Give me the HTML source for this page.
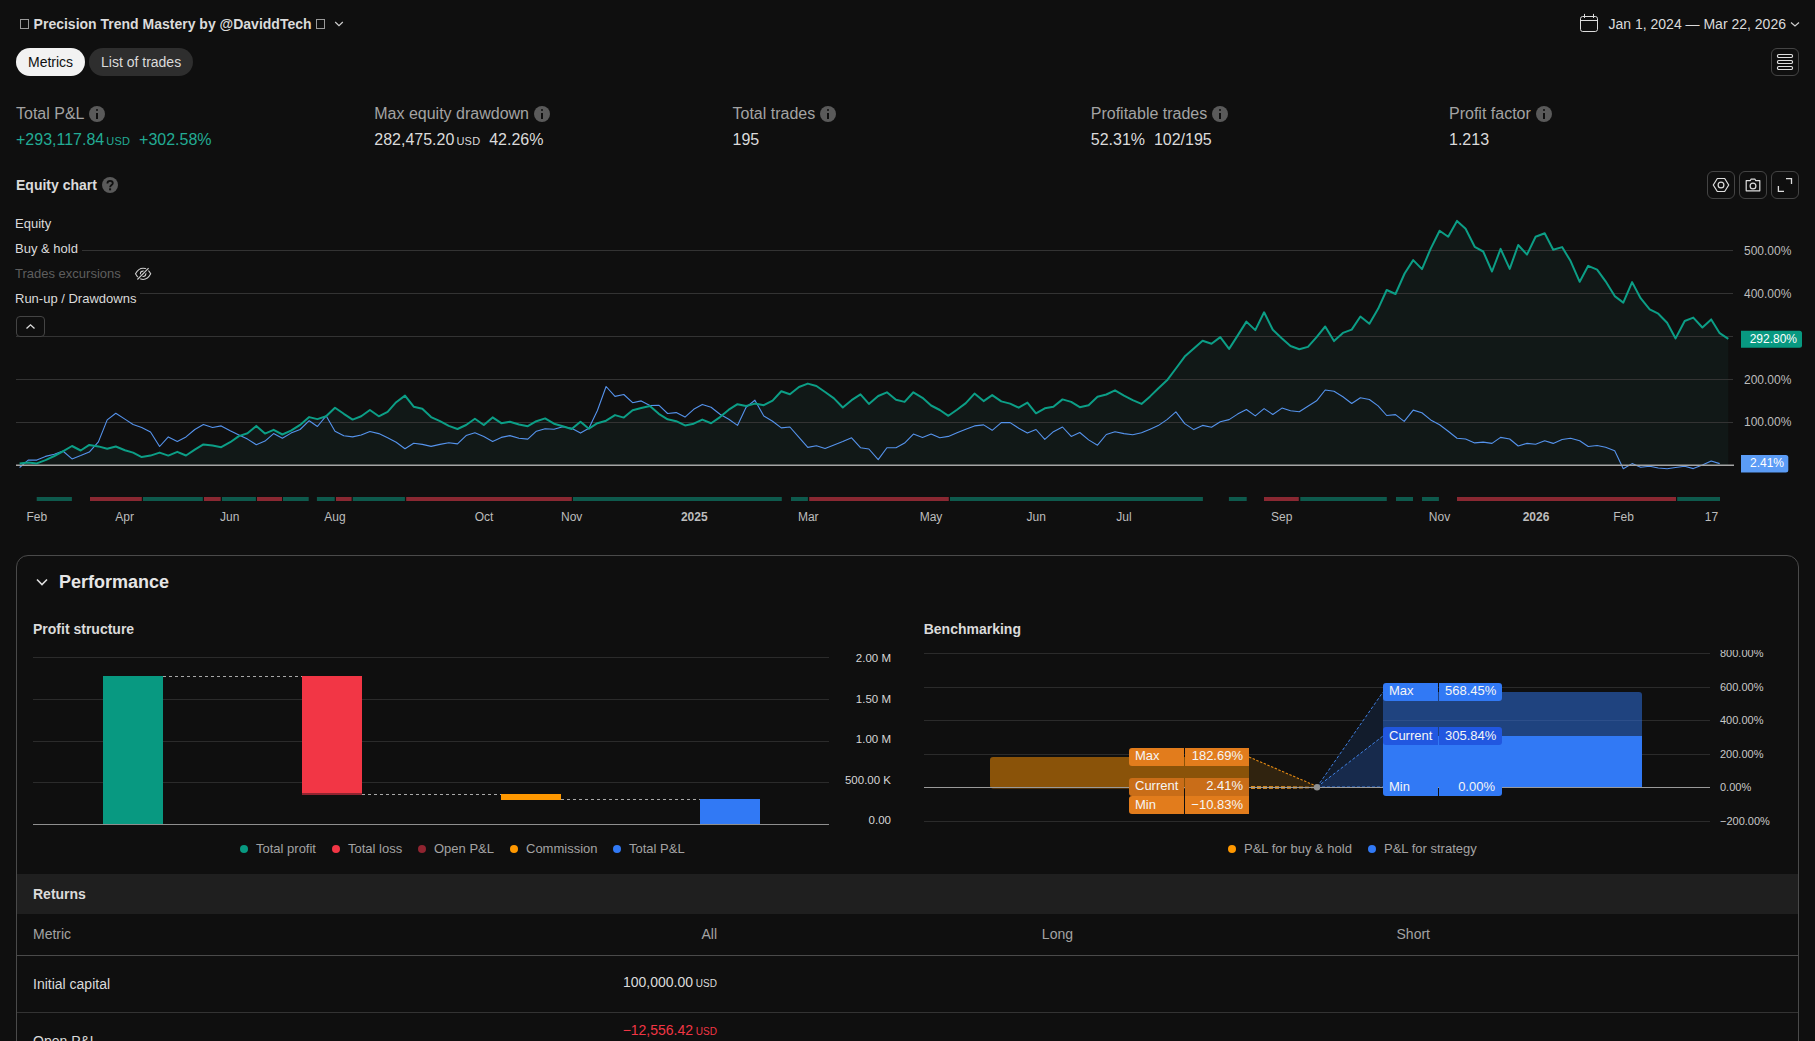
<!DOCTYPE html>
<html><head><meta charset="utf-8">
<style>
*{box-sizing:border-box;margin:0;padding:0}
html,body{width:1815px;height:1041px;overflow:hidden;background:#0f0f0f;font-family:"Liberation Sans",sans-serif;color:#dbdbdb}
.a{position:absolute;white-space:nowrap}
svg.a{overflow:visible}
.title{left:20px;top:15px;font-size:14px;font-weight:bold;color:#dbdbdb;line-height:18px}
.tofu{display:inline-block;width:8px;height:11px;border:1px solid #cfcfcf;vertical-align:-1px}
.pill{top:48px;height:28px;border-radius:14px;font-size:14px;line-height:28px;padding:0 12px}
.lbl{font-size:16px;color:#a3a3a3;line-height:20px}
.val{font-size:16px;color:#dbdbdb;line-height:20px}
.usd{font-size:11px;letter-spacing:0.2px;margin-left:1px}
.info{display:inline-block;width:16px;height:16px;border-radius:50%;background:#5a5a5a;vertical-align:-3px;margin-left:5px;position:relative}
.info::before{content:"";position:absolute;left:7px;top:3px;width:2px;height:2px;background:#0f0f0f;border-radius:1px}
.info::after{content:"";position:absolute;left:7px;top:6.5px;width:2px;height:6px;background:#0f0f0f}
.q{display:inline-block;width:16px;height:16px;border-radius:50%;background:#5a5a5a;vertical-align:0px;margin-left:5px;position:relative;top:-1px;color:#0f0f0f;font-size:12px;line-height:16px;text-align:center;font-weight:bold}
.ibtn{top:171px;width:28px;height:28px;border:1px solid #444;border-radius:6px}
.leg{font-size:13px;color:#dbdbdb;line-height:16px;left:15px}
.pleg{font-size:13px;color:#a3a3a3;line-height:16px}
.dot{display:inline-block;width:8px;height:8px;border-radius:50%;margin-right:8px;vertical-align:0px}
.bl{position:absolute;height:18px;font-size:13px;line-height:16px;color:#f5f5f5;padding:0 6px}
</style></head><body>

<div class="a" style="left:20px;top:19px;width:9px;height:10px;border:1px solid #9a9a9a"></div>
<div class="a title" style="left:33.6px">Precision Trend Mastery by @DaviddTech</div>
<div class="a" style="left:316px;top:19px;width:9px;height:10px;border:1px solid #9a9a9a"></div>
<svg class="a" style="left:334px;top:19px" width="10" height="10" viewBox="0 0 10 10"><path d="M1.2 3 L5 6.6 L8.8 3" stroke="#cfcfcf" stroke-width="1.2" fill="none"/></svg>

<svg class="a" style="left:1579px;top:13px" width="20" height="20" viewBox="0 0 20 20"><rect x="1.5" y="3.5" width="17" height="15" rx="2.2" stroke="#dcdcdc" stroke-width="1" fill="none"/><path d="M1.5 7.5H18.5M5.5 0.9V5M14.5 0.9V5" stroke="#dcdcdc" stroke-width="1"/></svg>
<div class="a" style="left:1608.5px;top:15px;font-size:14px;line-height:18px;color:#dbdbdb">Jan 1, 2024 — Mar 22, 2026</div>
<svg class="a" style="left:1790px;top:19px" width="10" height="10" viewBox="0 0 10 10"><path d="M1 3.5 L5 7 L9 3.5" stroke="#cfcfcf" stroke-width="1.2" fill="none"/></svg>

<div class="a pill" style="left:16px;width:69px;background:#f2f2f2;color:#0f0f0f">Metrics</div>
<div class="a pill" style="left:89px;width:104px;background:#2e2e2e;color:#dbdbdb">List of trades</div>

<div class="a" style="left:1771px;top:48px;width:28px;height:28px;border:1px solid #444;border-radius:6px"></div>
<svg class="a" style="left:1771px;top:48px" width="28" height="28" viewBox="0 0 28 28"><g stroke="#dedede" stroke-width="1.2" fill="none"><rect x="6.5" y="6.5" width="15" height="3" rx="1.2"/><rect x="6.5" y="12.5" width="15" height="3" rx="1.2"/><rect x="6.5" y="18.5" width="15" height="3" rx="1.2"/></g></svg>

<!-- metrics -->
<div class="a lbl" style="left:16px;top:104px">Total P&amp;L<span class="info"></span></div>
<div class="a val" style="left:16px;top:130px;color:#22ab94">+293,117.84<span class="usd">&#8202;USD</span>&nbsp;&nbsp;+302.58%</div>
<div class="a lbl" style="left:374.25px;top:104px">Max equity drawdown<span class="info"></span></div>
<div class="a val" style="left:374.25px;top:130px">282,475.20<span class="usd">&#8202;USD</span>&nbsp;&nbsp;42.26%</div>
<div class="a lbl" style="left:732.5px;top:104px">Total trades<span class="info"></span></div>
<div class="a val" style="left:732.5px;top:130px">195</div>
<div class="a lbl" style="left:1090.75px;top:104px">Profitable trades<span class="info"></span></div>
<div class="a val" style="left:1090.75px;top:130px">52.31%&nbsp;&nbsp;102/195</div>
<div class="a lbl" style="left:1449px;top:104px">Profit factor<span class="info"></span></div>
<div class="a val" style="left:1449px;top:130px">1.213</div>

<div class="a" style="left:16px;top:176px;font-size:14px;font-weight:bold;line-height:18px">Equity chart<svg width="16" height="16" viewBox="0 0 16 16" style="position:absolute;left:86px;top:1px"><circle cx="8" cy="8" r="8" fill="#5a5a5a"/><path d="M5.4 6.4 C5.4 4.8 6.6 3.9 8.1 3.9 C9.7 3.9 10.8 4.9 10.8 6.3 C10.8 7.9 8.1 8.3 8.1 10.3" stroke="#0f0f0f" stroke-width="1.8" fill="none"/><rect x="7.1" y="11.3" width="2" height="2" fill="#0f0f0f"/></svg></div>

<div class="a ibtn" style="left:1707px"></div>
<div class="a ibtn" style="left:1739px"></div>
<div class="a ibtn" style="left:1771px"></div>
<svg class="a" style="left:1707px;top:171px" width="28" height="28" viewBox="0 0 28 28"><g stroke="#dedede" stroke-width="1.2" fill="none"><path d="M6.3 14 L10.3 7.5 H17.7 L21.7 14 L17.7 20.5 H10.3 Z"/><circle cx="14" cy="14" r="2.9"/></g></svg>
<svg class="a" style="left:1739px;top:171px" width="28" height="28" viewBox="0 0 28 28"><g stroke="#dedede" stroke-width="1.2" fill="none"><path d="M7.2 9.6 H11.4 L12 8.1 H16 L16.6 9.6 H20.8 V19.8 H7.2 Z" stroke-linejoin="round"/><circle cx="14" cy="15" r="2.9"/></g></svg>
<svg class="a" style="left:1771px;top:171px" width="28" height="28" viewBox="0 0 28 28"><g stroke="#dedede" stroke-width="1.3" fill="none"><path d="M15 7.6 H20.5 V13"/><path d="M7.4 15 V20.4 H13"/></g></svg>

<!-- equity chart -->
<svg class="a" style="left:0;top:0" width="1815" height="1041">
<path d="M19.6,465 L19.6,463.4 L28.2,462.6 L36.8,463.4 L45.5,460.1 L54.3,456.0 L62.9,451.3 L72.0,446.0 L80.7,450.5 L89.3,444.9 L98.4,446.4 L107.2,448.8 L115.8,446.5 L124.9,450.2 L133.1,452.6 L141.7,457.1 L150.5,455.6 L159.6,452.6 L168.3,455.6 L177.3,451.8 L186.0,455.5 L194.8,449.7 L203.4,444.4 L212.5,445.5 L221.2,447.2 L230.2,442.2 L238.9,436.1 L247.5,433.3 L256.3,425.9 L265.0,433.6 L273.6,429.8 L282.4,434.5 L291.0,430.7 L300.1,424.9 L309.2,417.1 L317.4,419.1 L326.1,416.3 L335.0,407.7 L343.8,413.8 L352.6,419.6 L361.2,416.3 L369.9,410.0 L378.8,416.3 L387.6,411.8 L396.2,402.2 L405.0,395.6 L413.7,406.7 L422.3,408.8 L431.1,417.1 L440.0,421.2 L448.8,425.9 L457.5,429.0 L466.1,425.0 L474.9,418.8 L483.8,425.0 L492.6,417.4 L501.3,423.2 L509.9,421.7 L519.0,424.5 L527.8,426.2 L536.4,421.2 L545.1,418.4 L554.0,423.7 L562.8,426.2 L571.6,429.0 L580.5,421.7 L588.9,428.7 L597.4,423.2 L606.1,420.7 L615.0,415.1 L623.8,417.6 L632.6,410.2 L641.2,408.0 L649.9,406.0 L658.8,413.8 L667.6,419.3 L676.2,421.2 L685.0,425.4 L693.7,423.7 L702.3,419.6 L711.1,423.2 L720.0,417.1 L728.8,409.7 L737.5,404.2 L746.1,406.0 L754.9,403.6 L763.8,405.2 L772.6,400.6 L781.3,391.2 L789.9,394.3 L799.0,387.0 L807.8,383.6 L816.4,386.0 L825.1,392.0 L834.0,398.4 L842.8,407.5 L851.6,400.2 L860.5,394.3 L868.9,403.9 L878.2,396.0 L886.9,392.3 L896.0,399.8 L904.6,401.9 L913.4,392.3 L922.5,397.8 L931.1,405.5 L939.8,410.0 L948.4,415.8 L957.0,409.7 L965.8,403.1 L974.5,393.6 L983.6,401.1 L992.2,395.1 L1001.3,401.4 L1010.1,403.6 L1018.7,407.7 L1027.4,402.6 L1036.0,413.3 L1044.8,408.3 L1053.4,406.7 L1062.5,399.4 L1071.2,401.9 L1079.8,407.2 L1088.6,405.2 L1097.5,396.8 L1106.3,394.5 L1115.0,390.3 L1124.0,395.6 L1132.7,400.2 L1141.5,403.9 L1150.1,396.4 L1158.2,388.5 L1167.0,380.3 L1175.9,368.5 L1184.7,356.6 L1193.8,348.4 L1202.6,340.7 L1211.5,343.8 L1220.3,337.1 L1229.1,348.9 L1237.6,335.6 L1246.4,321.6 L1255.3,330.1 L1264.1,312.3 L1272.8,329.8 L1282.0,338.4 L1290.5,346.0 L1299.3,349.3 L1307.9,346.9 L1316.6,337.1 L1325.2,326.5 L1334.0,341.1 L1342.9,332.9 L1351.7,329.6 L1360.4,316.5 L1369.4,323.8 L1378.1,308.8 L1386.7,290.0 L1395.5,294.0 L1404.6,273.5 L1413.2,260.1 L1422.0,269.1 L1430.6,248.9 L1439.6,230.7 L1448.2,236.7 L1457.0,220.9 L1465.6,228.7 L1474.7,246.8 L1483.2,251.5 L1492.0,271.5 L1500.6,248.9 L1509.7,268.9 L1518.2,245.0 L1527.0,254.6 L1535.6,236.7 L1544.7,233.3 L1553.2,249.7 L1562.1,247.1 L1570.6,261.1 L1579.7,281.8 L1588.2,265.8 L1597.1,269.6 L1605.6,281.3 L1614.7,296.1 L1623.3,302.6 L1632.1,282.1 L1640.6,298.2 L1649.7,309.3 L1658.3,313.7 L1667.1,322.8 L1675.6,338.4 L1684.7,321.0 L1693.3,317.6 L1702.4,327.5 L1711.2,319.4 L1719.7,333.2 L1728.3,338.9 L1728.3,465 Z" fill="#111817"/>
<g stroke="#333333" stroke-width="1"><line x1="16" x2="1733" y1="250.5" y2="250.5"/><line x1="16" x2="1733" y1="293.5" y2="293.5"/><line x1="16" x2="1733" y1="336.5" y2="336.5"/><line x1="16" x2="1733" y1="379.5" y2="379.5"/><line x1="16" x2="1733" y1="422.5" y2="422.5"/></g>
<polyline points="19.6,467.5 28.2,460.1 36.8,460.1 45.5,456.4 54.3,454.3 62.9,451.0 72.0,458.9 80.7,455.6 89.3,452.1 98.4,441.9 107.2,419.9 115.8,413.3 124.9,419.1 133.1,424.5 141.7,427.5 150.5,432.0 159.6,446.5 168.3,436.9 177.3,441.4 186.0,436.9 194.8,429.5 203.4,424.5 212.5,427.5 221.2,425.9 230.2,430.8 238.9,435.0 247.5,439.1 256.3,444.7 265.0,441.1 273.6,433.6 282.4,438.3 291.0,433.1 300.1,429.5 309.2,420.7 317.4,426.5 326.1,415.8 335.0,431.2 343.8,435.8 352.6,436.9 361.2,435.0 369.9,431.5 378.8,433.6 387.6,437.8 396.2,442.2 405.0,448.8 413.7,443.2 422.3,444.4 431.1,446.4 440.0,444.4 448.8,442.7 457.5,443.9 466.1,435.6 474.9,432.8 483.8,436.6 492.6,441.4 501.3,437.4 509.9,435.6 519.0,438.3 527.8,439.1 536.4,431.2 545.1,428.7 554.0,429.2 562.8,426.7 571.6,428.3 580.5,433.1 588.9,428.2 597.4,410.5 606.1,386.5 615.0,396.4 623.8,394.5 632.6,402.7 641.2,400.9 649.9,405.5 658.8,405.2 667.6,413.5 676.2,412.6 685.0,417.1 693.7,409.3 702.3,404.4 711.1,407.2 720.0,414.3 728.8,419.3 737.5,425.4 746.1,407.2 754.9,400.2 763.8,416.0 772.6,421.2 781.3,427.9 789.9,427.0 799.0,437.3 807.8,447.4 816.4,445.7 825.1,448.5 834.0,444.9 842.8,441.6 851.6,437.8 860.5,447.7 868.9,449.0 878.2,459.6 886.9,447.7 896.0,447.7 904.6,443.1 913.4,434.1 922.5,437.4 931.1,434.1 939.8,437.8 948.4,436.4 957.0,432.8 965.8,429.2 974.5,425.9 983.6,424.9 992.2,430.3 1001.3,422.6 1010.1,422.6 1018.7,428.2 1027.4,433.1 1036.0,429.5 1044.8,439.4 1053.4,431.7 1062.5,427.0 1071.2,436.4 1079.8,432.5 1088.6,439.9 1097.5,445.2 1106.3,434.5 1115.0,431.7 1124.0,433.6 1132.7,434.8 1141.5,432.8 1150.1,429.2 1158.2,425.6 1167.0,419.6 1175.9,411.9 1184.7,423.6 1193.8,429.6 1202.6,425.4 1211.5,427.2 1220.3,421.8 1229.1,419.6 1237.6,414.1 1246.4,409.5 1255.3,415.9 1264.1,408.6 1272.8,414.5 1282.0,408.1 1290.5,410.8 1299.3,411.7 1307.9,406.2 1316.6,400.8 1325.2,390.0 1334.0,391.3 1342.9,396.8 1351.7,403.5 1360.4,397.7 1369.4,399.5 1378.1,405.9 1386.7,415.5 1395.5,414.6 1404.2,421.4 1413.2,410.1 1421.9,412.8 1430.7,419.9 1439.6,424.7 1448.2,431.2 1457.0,438.2 1465.6,439.0 1474.7,442.9 1483.2,442.1 1492.0,443.4 1500.6,437.4 1509.7,439.0 1518.2,446.0 1527.0,443.4 1535.6,444.2 1544.7,440.8 1553.2,443.4 1562.1,439.5 1570.6,438.2 1579.7,440.8 1588.2,446.5 1597.1,445.5 1605.6,447.3 1614.7,450.7 1623.3,468.8 1632.1,463.6 1640.6,467.3 1649.7,466.2 1658.3,468.0 1667.1,468.8 1675.6,467.5 1684.7,466.2 1693.3,468.6 1702.4,464.9 1711.2,461.0 1719.7,463.6" fill="none" stroke="#5593ec" stroke-width="1.1" stroke-linejoin="round"/>
<line x1="16" x2="1734" y1="465.3" y2="465.3" stroke="#a5a5a5" stroke-width="1.5"/>
<polyline points="19.6,463.4 28.2,462.6 36.8,463.4 45.5,460.1 54.3,456.0 62.9,451.3 72.0,446.0 80.7,450.5 89.3,444.9 98.4,446.4 107.2,448.8 115.8,446.5 124.9,450.2 133.1,452.6 141.7,457.1 150.5,455.6 159.6,452.6 168.3,455.6 177.3,451.8 186.0,455.5 194.8,449.7 203.4,444.4 212.5,445.5 221.2,447.2 230.2,442.2 238.9,436.1 247.5,433.3 256.3,425.9 265.0,433.6 273.6,429.8 282.4,434.5 291.0,430.7 300.1,424.9 309.2,417.1 317.4,419.1 326.1,416.3 335.0,407.7 343.8,413.8 352.6,419.6 361.2,416.3 369.9,410.0 378.8,416.3 387.6,411.8 396.2,402.2 405.0,395.6 413.7,406.7 422.3,408.8 431.1,417.1 440.0,421.2 448.8,425.9 457.5,429.0 466.1,425.0 474.9,418.8 483.8,425.0 492.6,417.4 501.3,423.2 509.9,421.7 519.0,424.5 527.8,426.2 536.4,421.2 545.1,418.4 554.0,423.7 562.8,426.2 571.6,429.0 580.5,421.7 588.9,428.7 597.4,423.2 606.1,420.7 615.0,415.1 623.8,417.6 632.6,410.2 641.2,408.0 649.9,406.0 658.8,413.8 667.6,419.3 676.2,421.2 685.0,425.4 693.7,423.7 702.3,419.6 711.1,423.2 720.0,417.1 728.8,409.7 737.5,404.2 746.1,406.0 754.9,403.6 763.8,405.2 772.6,400.6 781.3,391.2 789.9,394.3 799.0,387.0 807.8,383.6 816.4,386.0 825.1,392.0 834.0,398.4 842.8,407.5 851.6,400.2 860.5,394.3 868.9,403.9 878.2,396.0 886.9,392.3 896.0,399.8 904.6,401.9 913.4,392.3 922.5,397.8 931.1,405.5 939.8,410.0 948.4,415.8 957.0,409.7 965.8,403.1 974.5,393.6 983.6,401.1 992.2,395.1 1001.3,401.4 1010.1,403.6 1018.7,407.7 1027.4,402.6 1036.0,413.3 1044.8,408.3 1053.4,406.7 1062.5,399.4 1071.2,401.9 1079.8,407.2 1088.6,405.2 1097.5,396.8 1106.3,394.5 1115.0,390.3 1124.0,395.6 1132.7,400.2 1141.5,403.9 1150.1,396.4 1158.2,388.5 1167.0,380.3 1175.9,368.5 1184.7,356.6 1193.8,348.4 1202.6,340.7 1211.5,343.8 1220.3,337.1 1229.1,348.9 1237.6,335.6 1246.4,321.6 1255.3,330.1 1264.1,312.3 1272.8,329.8 1282.0,338.4 1290.5,346.0 1299.3,349.3 1307.9,346.9 1316.6,337.1 1325.2,326.5 1334.0,341.1 1342.9,332.9 1351.7,329.6 1360.4,316.5 1369.4,323.8 1378.1,308.8 1386.7,290.0 1395.5,294.0 1404.6,273.5 1413.2,260.1 1422.0,269.1 1430.6,248.9 1439.6,230.7 1448.2,236.7 1457.0,220.9 1465.6,228.7 1474.7,246.8 1483.2,251.5 1492.0,271.5 1500.6,248.9 1509.7,268.9 1518.2,245.0 1527.0,254.6 1535.6,236.7 1544.7,233.3 1553.2,249.7 1562.1,247.1 1570.6,261.1 1579.7,281.8 1588.2,265.8 1597.1,269.6 1605.6,281.3 1614.7,296.1 1623.3,302.6 1632.1,282.1 1640.6,298.2 1649.7,309.3 1658.3,313.7 1667.1,322.8 1675.6,338.4 1684.7,321.0 1693.3,317.6 1702.4,327.5 1711.2,319.4 1719.7,333.2 1728.3,338.9" fill="none" stroke="#0c9e86" stroke-width="2" stroke-linejoin="round"/>
<rect x="36.7" y="497" width="35.2" height="4" fill="#0e5a4d"/><rect x="90.0" y="497" width="51.8" height="4" fill="#8a2832"/><rect x="143.0" y="497" width="59.8" height="4" fill="#0e5a4d"/><rect x="204.0" y="497" width="16.7" height="4" fill="#8a2832"/><rect x="222.0" y="497" width="33.9" height="4" fill="#0e5a4d"/><rect x="257.0" y="497" width="25.0" height="4" fill="#8a2832"/><rect x="283.0" y="497" width="25.7" height="4" fill="#0e5a4d"/><rect x="316.9" y="497" width="17.8" height="4" fill="#0e5a4d"/><rect x="336.0" y="497" width="15.6" height="4" fill="#8a2832"/><rect x="352.8" y="497" width="52.1" height="4" fill="#0e5a4d"/><rect x="406.2" y="497" width="165.6" height="4" fill="#8a2832"/><rect x="573.0" y="497" width="208.8" height="4" fill="#0e5a4d"/><rect x="791.0" y="497" width="16.9" height="4" fill="#0e5a4d"/><rect x="809.2" y="497" width="139.6" height="4" fill="#8a2832"/><rect x="950.0" y="497" width="252.9" height="4" fill="#0e5a4d"/><rect x="1228.9" y="497" width="17.8" height="4" fill="#0e5a4d"/><rect x="1264.0" y="497" width="34.8" height="4" fill="#8a2832"/><rect x="1300.3" y="497" width="86.5" height="4" fill="#0e5a4d"/><rect x="1396.0" y="497" width="17.0" height="4" fill="#0e5a4d"/><rect x="1422.0" y="497" width="16.9" height="4" fill="#0e5a4d"/><rect x="1457.0" y="497" width="219.0" height="4" fill="#8a2832"/><rect x="1677.2" y="497" width="42.8" height="4" fill="#0e5a4d"/>
<g font-family="Liberation Sans" font-size="12" fill="#bdbdbd"><text x="36.8" y="521" text-anchor="middle">Feb</text><text x="124.6" y="521" text-anchor="middle">Apr</text><text x="229.7" y="521" text-anchor="middle">Jun</text><text x="334.9" y="521" text-anchor="middle">Aug</text><text x="484.0" y="521" text-anchor="middle">Oct</text><text x="571.7" y="521" text-anchor="middle">Nov</text><text x="694.3" y="521" text-anchor="middle" font-weight="bold">2025</text><text x="808.3" y="521" text-anchor="middle">Mar</text><text x="931.0" y="521" text-anchor="middle">May</text><text x="1036.2" y="521" text-anchor="middle">Jun</text><text x="1124.0" y="521" text-anchor="middle">Jul</text><text x="1281.8" y="521" text-anchor="middle">Sep</text><text x="1439.5" y="521" text-anchor="middle">Nov</text><text x="1536.0" y="521" text-anchor="middle" font-weight="bold">2026</text><text x="1623.5" y="521" text-anchor="middle">Feb</text><text x="1711.4" y="521" text-anchor="middle">17</text></g>
<g font-family="Liberation Sans" font-size="12" fill="#bdbdbd"><text x="1744" y="255.1">500.00%</text><text x="1744" y="297.8">400.00%</text><text x="1744" y="383.8">200.00%</text><text x="1744" y="425.7">100.00%</text></g>
<path d="M1741 330.8 H1799.5 Q1802 330.8 1802 333.3 V345.3 Q1802 347.8 1799.5 347.8 H1741 Z" fill="#089981"/>
<text x="1797" y="342.6" text-anchor="end" font-family="Liberation Sans" font-size="12" fill="#ffffff">292.80%</text>
<path d="M1741 455 H1785.8 Q1788.3 455 1788.3 457.5 V470 Q1788.3 472.5 1785.8 472.5 H1741 Z" fill="#5b9cf6"/>
<text x="1784" y="466.6" text-anchor="end" font-family="Liberation Sans" font-size="12" fill="#ffffff">2.41%</text>
</svg>

<div class="a leg" style="top:216px;background:#0f0f0f;padding-right:8px">Equity</div>
<div class="a leg" style="top:241px;background:#0f0f0f;padding-right:4px;width:67px">Buy &amp; hold</div>
<div class="a leg" style="top:266px;background:#0f0f0f;color:#5e5e5e;width:141px">Trades excursions</div>
<svg class="a" style="left:134px;top:266px" width="18" height="16" viewBox="0 0 18 16"><g fill="none"><path d="M1.5 7.8 C3.5 4 6 2.2 9.1 2.2 C12.2 2.2 14.7 4 16.7 7.8 C14.7 11.6 12.2 13.5 9.1 13.5 C6 13.5 3.5 11.6 1.5 7.8 Z" stroke="#cfcfcf" stroke-width="1.1"/><circle cx="9.1" cy="7.8" r="2.7" stroke="#cfcfcf" stroke-width="1.1"/><path d="M3.4 13.5 L14.6 2.2" stroke="#0f0f0f" stroke-width="3"/><path d="M3.4 13.5 L14.6 2.2" stroke="#cfcfcf" stroke-width="1.1"/></g></svg>
<div class="a leg" style="top:291px;background:#0f0f0f;width:125px">Run-up / Drawdowns</div>
<div class="a" style="left:16px;top:316px;width:29px;height:21px;border:1px solid #444;border-radius:4px;background:#0f0f0f"></div>
<svg class="a" style="left:16px;top:316px" width="29" height="21" viewBox="0 0 29 21"><path d="M10.5 12.5 L14.5 8.8 L18.5 12.5" stroke="#dedede" stroke-width="1.3" fill="none"/></svg>

<!-- performance panel -->
<div class="a" style="left:16px;top:555px;width:1783px;height:600px;border:1px solid #4a4a4a;border-radius:12px"></div>
<svg class="a" style="left:35px;top:576px" width="14" height="12" viewBox="0 0 14 12"><path d="M2 3.5 L7 8.5 L12 3.5" stroke="#dedede" stroke-width="1.6" fill="none"/></svg>
<div class="a" style="left:59px;top:571px;font-size:18px;font-weight:bold;line-height:22px;color:#e6e6e6">Performance</div>

<div class="a" style="left:33px;top:620px;font-size:14px;font-weight:bold;line-height:18px">Profit structure</div>
<div class="a" style="left:923.7px;top:620px;font-size:14px;font-weight:bold;line-height:18px">Benchmarking</div>


<!-- profit structure chart -->
<svg class="a" style="left:0;top:0" width="1815" height="1041">
<g stroke="#2b2b2b" stroke-width="1"><line x1="33" x2="829" y1="657.5" y2="657.5"/><line x1="33" x2="829" y1="699.5" y2="699.5"/><line x1="33" x2="829" y1="741.5" y2="741.5"/><line x1="33" x2="829" y1="782.5" y2="782.5"/></g>
<rect x="103" y="676" width="60" height="148.5" fill="#089981"/>
<rect x="302" y="676" width="60" height="119" fill="#f23645"/>
<rect x="302" y="793" width="60" height="2" fill="#902430"/>
<rect x="501" y="794" width="60" height="6" fill="#ff9800"/>
<rect x="700" y="799" width="60" height="25.5" fill="#3179f5"/>
<g stroke="#a8a8a8" stroke-width="1" stroke-dasharray="3 3"><line x1="163" x2="302" y1="676.5" y2="676.5"/><line x1="362" x2="501" y1="794.5" y2="794.5"/><line x1="561" x2="700" y1="799.5" y2="799.5"/></g>
<line x1="33" x2="829" y1="824.5" y2="824.5" stroke="#8f8f8f" stroke-width="1.2"/>
<g font-family="Liberation Sans" font-size="11.5" fill="#d6d6d6" text-anchor="end">
<text x="891" y="662">2.00 M</text><text x="891" y="703">1.50 M</text><text x="891" y="743.2">1.00 M</text><text x="891" y="784.2">500.00 K</text><text x="891" y="824.3">0.00</text></g>
</svg>
<div class="a pleg" style="left:240px;top:841px"><span class="dot" style="background:#089981"></span>Total profit</div>
<div class="a pleg" style="left:332px;top:841px"><span class="dot" style="background:#f23645"></span>Total loss</div>
<div class="a pleg" style="left:418px;top:841px"><span class="dot" style="background:#902430"></span>Open P&amp;L</div>
<div class="a pleg" style="left:510px;top:841px"><span class="dot" style="background:#ff9800"></span>Commission</div>
<div class="a pleg" style="left:613px;top:841px"><span class="dot" style="background:#3179f5"></span>Total P&amp;L</div>

<!-- benchmarking chart -->
<svg class="a" style="left:0;top:0" width="1815" height="1041">
<g stroke="#2b2b2b" stroke-width="1"><line x1="924" x2="1710" y1="653.5" y2="653.5"/><line x1="924" x2="1710" y1="687.5" y2="687.5"/><line x1="924" x2="1710" y1="720.5" y2="720.5"/><line x1="924" x2="1710" y1="754.5" y2="754.5"/><line x1="924" x2="1710" y1="821.5" y2="821.5"/></g>
<path d="M990 760 Q990 757 993 757 L1249 757 L1249 788.5 L993 788.5 Q990 788.5 990 785.5 Z" fill="#8a5309"/>
<path d="M1249 757 L1317 787 L1249 788 Z" fill="#30230f"/>
<path d="M1317 787 L1383 692 L1383 787.5 Z" fill="#121c2c"/>
<path d="M1317 787 L1383 736 L1383 787.5 Z" fill="#172a4c"/>
<path d="M1383 692 L1639 692 Q1642 692 1642 695 L1642 736 L1383 736 Z" fill="#1f437f"/>
<rect x="1383" y="736" width="259" height="51.5" fill="#3179f5"/>
<g stroke="#2d4f8a" stroke-width="1"><line x1="1383" x2="1642" y1="720.5" y2="720.5"/></g>
<g stroke="#3f7fe0" stroke-width="1" stroke-dasharray="3 2"><line x1="1317" y1="787" x2="1383" y2="692"/><line x1="1317" y1="787" x2="1383" y2="736"/><line x1="1317" y1="787" x2="1383" y2="787"/></g>
<g stroke="#e58a12" stroke-width="1.1" stroke-dasharray="2.5 1.5"><line x1="1249" y1="757" x2="1316" y2="786"/></g>
<defs><linearGradient id="og" x1="0" x2="1" y1="0" y2="0"><stop offset="0" stop-color="#f29a1f" stop-opacity="0.9"/><stop offset="0.6" stop-color="#f29a1f" stop-opacity="0.7"/><stop offset="1" stop-color="#f29a1f" stop-opacity="0.15"/></linearGradient></defs><rect x="1249" y="786" width="66" height="3" fill="url(#og)" mask="url(#dm)"/><mask id="dm"><line x1="1249" x2="1315" y1="787.5" y2="787.5" stroke="#fff" stroke-width="3" stroke-dasharray="4 2" stroke-dashoffset="-2"/></mask>
<line x1="924" x2="1710" y1="787.5" y2="787.5" stroke="#9a9a9a" stroke-width="1.2"/>
<circle cx="1317" cy="787.2" r="3.2" fill="#8f8f8f"/>
<g font-family="Liberation Sans" font-size="11" fill="#c8c8c8">
<text x="1720" y="657">800.00%</text><text x="1720" y="691">600.00%</text><text x="1720" y="724">400.00%</text><text x="1720" y="758">200.00%</text><text x="1720" y="791">0.00%</text><text x="1720" y="825">−200.00%</text></g>
</svg>
<div class="a" style="left:1700px;top:640px;width:98px;height:10px;background:#0f0f0f"></div>
<div class="bl" style="left:1129px;top:748px;width:55px;background:#e27c1c;border-radius:3px 0 0 3px">Max</div>
<div class="bl" style="left:1185px;top:748px;width:64px;background:#e27c1c;text-align:right">182.69%</div>
<div class="bl" style="left:1129px;top:777.5px;height:18.5px;width:55px;background:#c96d18;border-radius:3px 0 0 3px">Current</div>
<div class="bl" style="left:1185px;top:777.5px;height:18.5px;width:64px;background:#c96d18;text-align:right">2.41%</div>
<div class="bl" style="line-height:17px;left:1129px;top:796px;width:55px;background:#e27c1c;border-radius:3px 0 0 3px">Min</div>
<div class="bl" style="line-height:17px;left:1185px;top:796px;width:64px;background:#e27c1c;text-align:right">−10.83%</div>
<div class="bl" style="left:1383px;top:683px;width:55px;background:#3179f5;border-radius:3px 0 0 3px">Max</div>
<div class="bl" style="padding-right:7px;left:1439px;top:683px;width:63px;background:#3179f5;text-align:right;border-radius:0 3px 3px 0">568.45%</div>
<div class="bl" style="line-height:17.5px;left:1383px;top:727px;width:55px;background:#2157e0;border-radius:3px 0 0 3px">Current</div>
<div class="bl" style="line-height:17.5px;padding-right:7px;left:1439px;top:727px;width:63px;background:#2157e0;text-align:right;border-radius:0 3px 3px 0">305.84%</div>
<div class="bl" style="line-height:18.5px;left:1383px;top:778px;width:55px;background:#3179f5;border-radius:3px 0 0 3px">Min</div>
<div class="bl" style="line-height:18.5px;padding-right:7px;left:1439px;top:778px;width:63px;background:#3179f5;text-align:right;border-radius:0 3px 3px 0">0.00%</div>
<div class="a pleg" style="left:1228px;top:841px"><span class="dot" style="background:#ff9800"></span>P&amp;L for buy &amp; hold</div>
<div class="a pleg" style="left:1368px;top:841px"><span class="dot" style="background:#3179f5"></span>P&amp;L for strategy</div>

<!-- returns table -->
<div class="a" style="left:17px;top:874px;width:1781px;height:40px;background:#1f1f1f"></div>
<div class="a" style="left:33px;top:885px;font-size:14px;font-weight:bold;line-height:18px">Returns</div>
<div class="a" style="left:33px;top:925px;font-size:14px;line-height:18px;color:#a3a3a3">Metric</div>
<div class="a" style="left:617px;top:925px;width:100px;text-align:right;font-size:14px;line-height:18px;color:#a3a3a3">All</div>
<div class="a" style="left:973px;top:925px;width:100px;text-align:right;font-size:14px;line-height:18px;color:#a3a3a3">Long</div>
<div class="a" style="left:1330px;top:925px;width:100px;text-align:right;font-size:14px;line-height:18px;color:#a3a3a3">Short</div>
<div class="a" style="left:17px;top:955px;width:1781px;height:1px;background:#4a4a4a"></div>
<div class="a" style="left:33px;top:975px;font-size:14px;line-height:18px">Initial capital</div>
<div class="a" style="left:517px;top:973px;width:200px;text-align:right;font-size:14px;line-height:18px">100,000.00<span style="font-size:10px">&nbsp;USD</span></div>
<div class="a" style="left:17px;top:1012px;width:1781px;height:1px;background:#333"></div>
<div class="a" style="left:33px;top:1032px;font-size:14px;line-height:18px">Open P&amp;L</div>
<div class="a" style="left:517px;top:1021px;width:200px;text-align:right;font-size:14px;line-height:18px;color:#f23645">−12,556.42<span style="font-size:10px">&nbsp;USD</span></div>

</body></html>
